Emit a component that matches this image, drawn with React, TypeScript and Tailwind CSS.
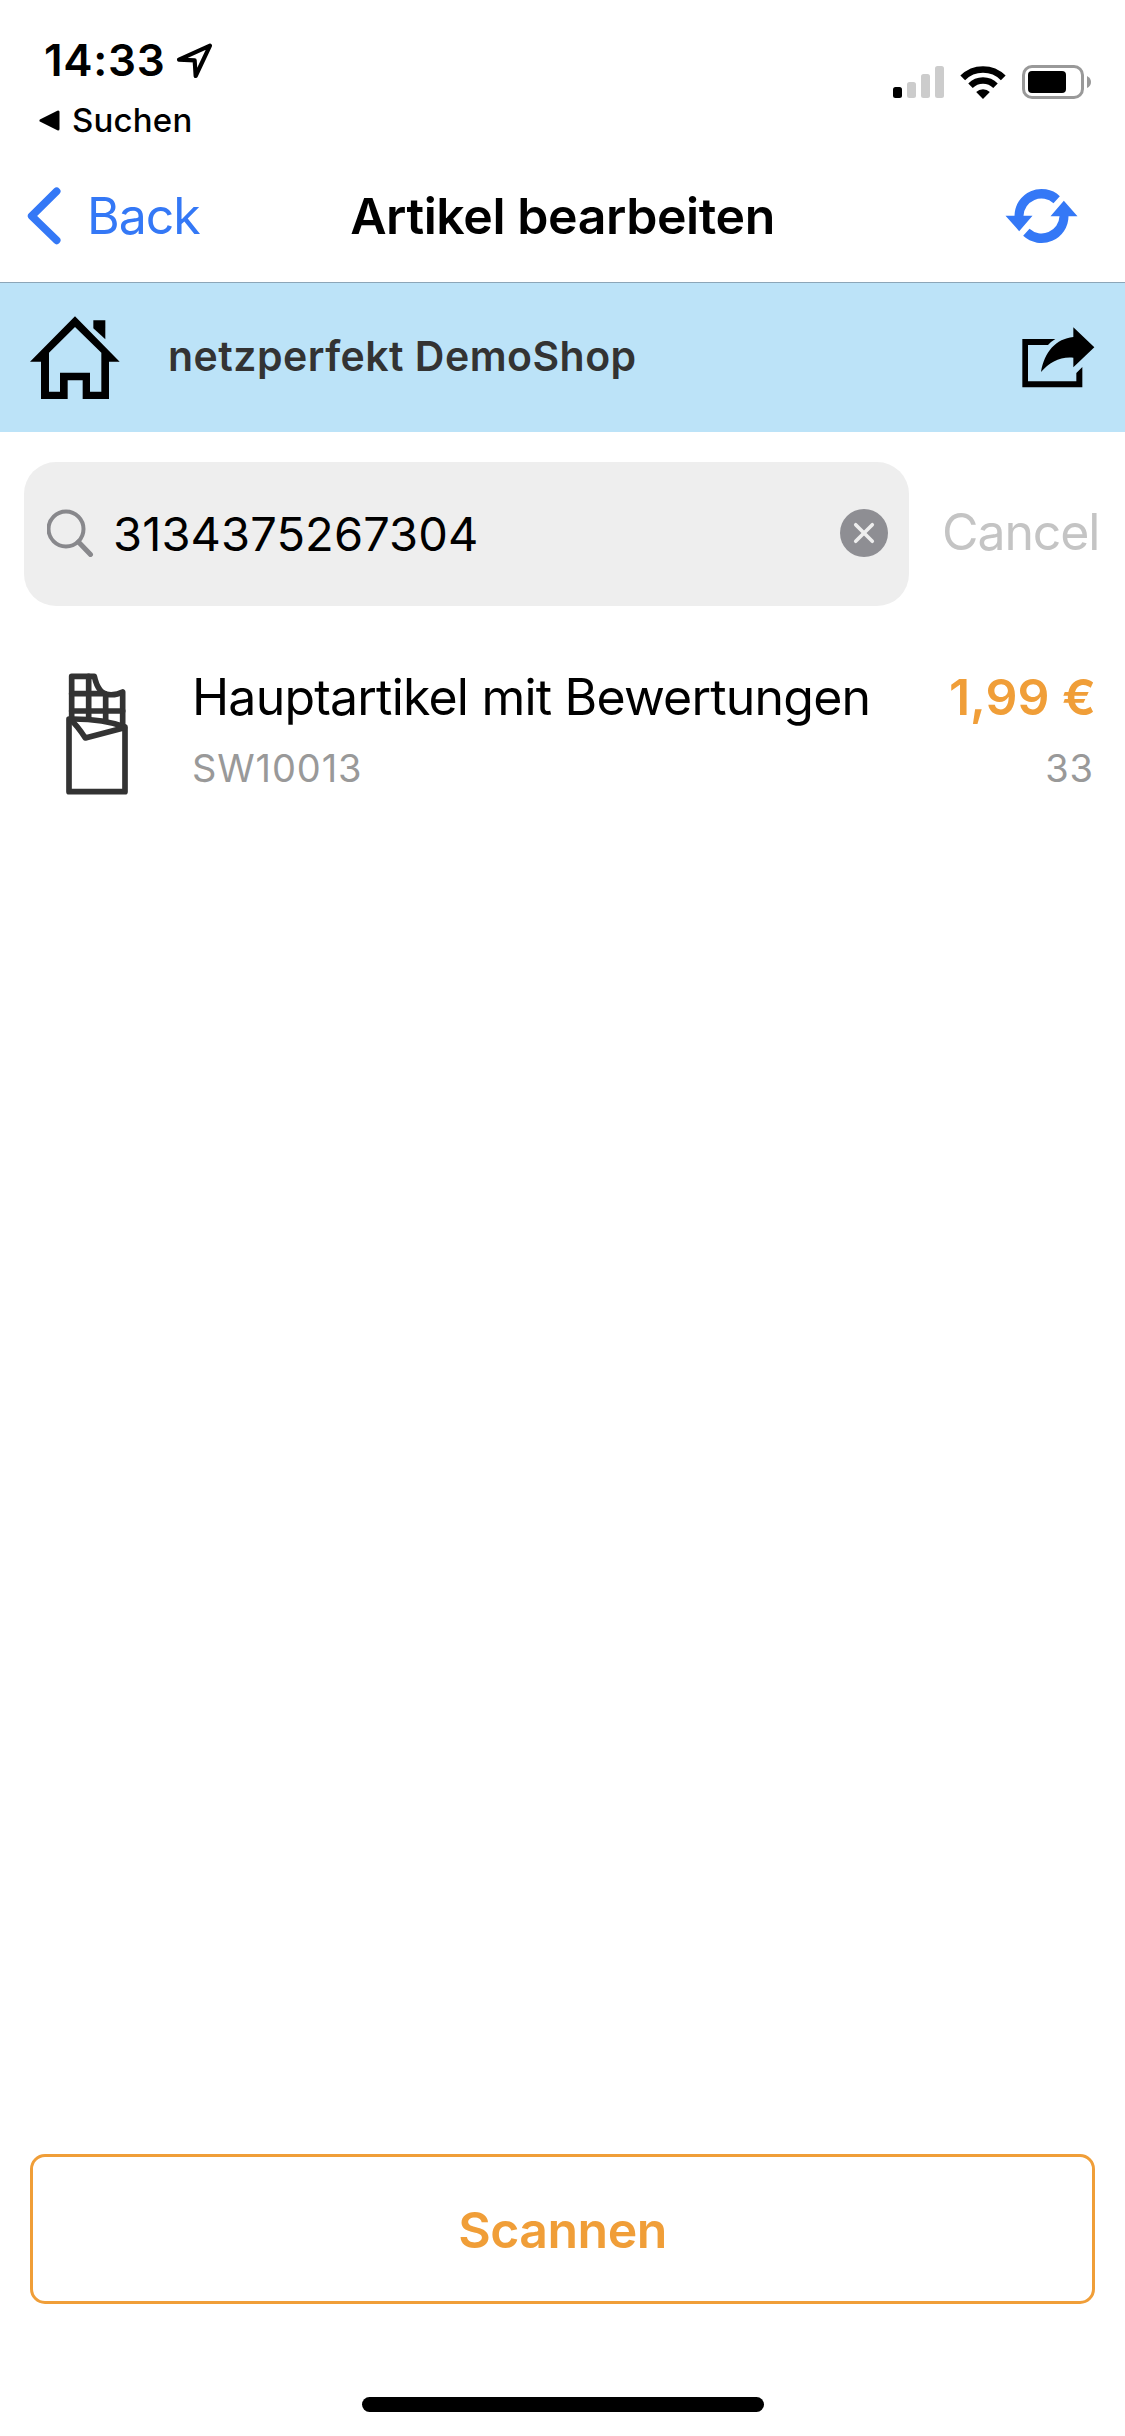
import React from 'react';

interface Article {
  name: string;
  sku: string;
  price: string;
  stock: number;
}

const articles: Article[] = [
  { name: 'Hauptartikel mit Bewertungen', sku: 'SW10013', price: '1,99 €', stock: 33 },
];

function LocationIcon() {
  return (
    <svg className="w-[37px] h-[37px]" viewBox="528 66 111 111" fill="none" stroke="#000" strokeWidth="12.5" strokeLinejoin="round">
      <path d="M630 77 L537 119 L584 121 L587 168 Z" />
    </svg>
  );
}

function SignalIcon() {
  return (
    <svg className="w-[51px] h-8" viewBox="0 0 51 32">
      <rect x="0" y="21" width="9" height="11" rx="2.5" fill="#000" />
      <rect x="14" y="16" width="9" height="16" rx="2.5" fill="#ccc" />
      <rect x="28" y="8" width="9" height="24" rx="2.5" fill="#ccc" />
      <rect x="42" y="0" width="9" height="32" rx="2.5" fill="#ccc" />
    </svg>
  );
}

function WifiIcon() {
  return (
    <svg className="w-[46px] h-[33px]" viewBox="300 75 138 99" fill="none" stroke="#000">
      <path d="M308.2 110.7 A86 86 0 0 1 429.8 110.7" strokeWidth="20" />
      <path d="M331.5 134 A53 53 0 0 1 406.5 134" strokeWidth="19" />
      <path d="M369 174 L348.5 153 A29 29 0 0 1 389.5 153 Z" fill="#000" stroke="none" />
    </svg>
  );
}

function BatteryIcon() {
  return (
    <svg className="w-[70px] h-[34px]" viewBox="0 0 70 34">
      <rect x="1.5" y="1.5" width="59" height="31" rx="8.5" fill="none" stroke="#999" strokeWidth="3" />
      <rect x="6" y="6" width="38" height="22" rx="4" fill="#000" />
      <path d="M65 11 Q69 13 69 17 Q69 21 65 23 Z" fill="#999" />
    </svg>
  );
}

function RefreshIcon() {
  const half = 'M598 465 A81 81 0 0 0 462 524 H435 L476 570 L516 524 H489 A54 54 0 0 1 579 486 Z';
  return (
    <svg className="w-[73px] h-[56px]" viewBox="433.5 440.5 219 168" fill="#3478f6">
      <path d={half} />
      <path d={half} transform="rotate(180 543 524.5)" />
    </svg>
  );
}

function HomeIcon() {
  return (
    <svg className="w-[90px] h-[84px]" viewBox="90 135 270 252" fill="#000" fillRule="evenodd">
      <path d="M225 136 L359 272 H327 V384 H248 V328 H203 V384 H123 V272 H90 Z M225 168 L147 245 V362 H180 V305 H270 V362 H304 V245 Z" />
      <path d="M280 148 H316 V205 L280 172 Z" />
    </svg>
  );
}

function ShareIcon() {
  return (
    <svg className="w-[73px] h-[61px]" viewBox="188 170 219 183" fill="#000">
      <path d="M189 206 H288 Q276 213 266 224 H206 V333 H351 V308 L369 290 V351 H189 Z" />
      <path d="M342 171 L405 231 L342 291 V262 C303 258 270 276 245 305 C255 245 290 205 342 200 Z" />
    </svg>
  );
}

function ChocolateIcon() {
  return (
    <svg className="w-[62px] h-[122px]" viewBox="79 68 186 366" fill="none" stroke="#333" strokeWidth="17" strokeLinejoin="round" strokeLinecap="round">
      <path d="M96 200 V78 H164 C172 114 186 132 208 133 C224 134 240 130 249 125 V224" />
      <path d="M96 130 H196 M96 182 H249 M147 78 V205 M198 134 V212" />
      <path d="M88 206 V424 H256 V230 C210 212 150 205 88 206 Z" />
      <path d="M92 208 C104 218 122 240 137 263 L254 232" />
    </svg>
  );
}

function StatusBar() {
  return (
    <div className="flex h-[150px] justify-between pt-[30px]">
      <div className="pl-[39px]">
        <div className="flex h-[60px] items-center pl-[5px]">
          <span className="w-[132px] whitespace-nowrap text-[44px] leading-[60px] font-semibold tracking-[0.7px]">14:33</span>
          <LocationIcon />
        </div>
        <div className="flex h-[60px] items-center">
          <svg className="w-[21px] h-[21px]" viewBox="0 0 21 21">
            <path d="M2 10.5 L19 2 V19 Z" stroke="#000" strokeWidth="3" strokeLinejoin="round" />
          </svg>
          <span className="ml-[12px] text-[33px] leading-[60px] font-medium tracking-[0.2px]">Suchen</span>
        </div>
      </div>
      <div className="mt-[35px] mr-[33px] flex h-[34px] items-center">
        <SignalIcon />
        <span className="ml-[16px]"><WifiIcon /></span>
        <span className="ml-[16px]"><BatteryIcon /></span>
      </div>
    </div>
  );
}

function NavBar() {
  return (
    <div className="grid h-[133px] grid-cols-[1fr_auto_1fr] items-center border-b border-[#8ca6b8]">
      <div className="flex items-center pl-[27px] text-[#3478f6]">
        <svg className="w-[35px] h-[58px]" viewBox="82 500 105 174" fill="none" stroke="currentColor" strokeWidth="23" strokeLinecap="round" strokeLinejoin="round">
          <path d="M171 513 L96 587 L171 660" />
        </svg>
        <span className="ml-[25px] text-[50px] leading-[60px] tracking-[-1px]">Back</span>
      </div>
      <h1 className="text-[50px] leading-[60px] font-semibold tracking-[-0.42px]">Artikel bearbeiten</h1>
      <div className="flex justify-end pr-[47px]">
        <RefreshIcon />
      </div>
    </div>
  );
}

function ShopHeader() {
  return (
    <div className="flex h-[149px] items-center bg-[#bce3f8] pr-[30px] pl-[30px]">
      <HomeIcon />
      <span className="mb-1 ml-[48px] flex-1 text-[41px] leading-[60px] font-semibold tracking-[0.47px] text-[#333]">netzperfekt DemoShop</span>
      <ShareIcon />
    </div>
  );
}

function SearchRow() {
  return (
    <div className="mt-[30px] flex h-[144px] items-center pl-[24px]">
      <div className="flex h-full w-[885px] items-center rounded-[32px] bg-[#eee] pr-[21px] pl-[23px]">
        <svg className="mb-[2px] w-[47px] h-[48px]" viewBox="0 0 47 48" fill="none" stroke="#88888c" strokeLinecap="round">
          <circle cx="19" cy="20" r="17.5" strokeWidth="4" />
          <path d="M31.5 33 L43.5 45.5" strokeWidth="5" />
        </svg>
        <span className="ml-[19px] flex-1 text-[47px] leading-[60px] tracking-[0.12px]">3134375267304</span>
        <svg className="mb-[2px] w-12 h-12" viewBox="0 0 48 48">
          <circle cx="24" cy="24" r="24" fill="#8e8e93" />
          <path d="M15.7 15.7 L32.3 32.3 M32.3 15.7 L15.7 32.3" stroke="#eee" strokeWidth="3.6" strokeLinecap="round" />
        </svg>
      </div>
      <span className="mb-1 ml-[33px] text-[50px] leading-[60px] tracking-[-1.1px] text-[#c4c4c4]">Cancel</span>
    </div>
  );
}

function ArticleRow({ article }: { article: Article }) {
  return (
    <div className="mt-[55px] flex pr-[29px] pl-[66px]">
      <div className="mt-[12px] w-[126px]">
        <ChocolateIcon />
      </div>
      <div className="flex-1">
        <div className="text-[50px] leading-[72px] tracking-[-0.8px] whitespace-nowrap">{article.name}</div>
        <div className="text-[38px] leading-[71px] tracking-[0.9px] text-[#999]">{article.sku}</div>
      </div>
      <div className="text-right whitespace-nowrap">
        <div className="text-[50px] leading-[72px] font-semibold text-[#f09e38]">{article.price}</div>
        <div className="pr-[2px] text-[38px] leading-[71px] tracking-[0.9px] text-[#999]">{article.stock}</div>
      </div>
    </div>
  );
}

export default function App() {
  return (
    <div className="flex h-[2436px] w-[1125px] flex-col bg-white font-[Inter,'Liberation_Sans',sans-serif] text-black">
      <StatusBar />
      <NavBar />
      <ShopHeader />
      <SearchRow />
      <main className="flex-1">
        {articles.map((a) => (
          <ArticleRow key={a.sku} article={a} />
        ))}
      </main>
      <button className="mx-[30px] h-[150px] rounded-[15px] border-3 border-[#f09e38] pt-[2px] text-[50px] leading-[60px] font-semibold tracking-[-0.5px] text-[#f09e38]">
        Scannen
      </button>
      <div className="mx-auto mt-[93px] mb-[24px] h-[15px] w-[402px] rounded-full bg-black" />
    </div>
  );
}
